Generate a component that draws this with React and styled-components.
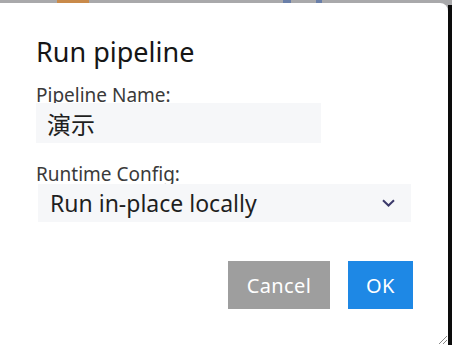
import React from 'react';
import styled, { createGlobalStyle } from 'styled-components';

const GlobalStyle = createGlobalStyle`
  html, body {
    margin: 0;
    padding: 0;
    background: #a9a9ab;
    overflow: hidden;
  }
`;

const Screen = styled.div`
  position: relative;
  width: 452px;
  height: 345px;
  display: flex;
  flex-flow: row;
  padding-top: 3px;
  box-sizing: border-box;
  font-family: 'Noto Sans', 'Noto Sans CJK SC', sans-serif;
`;

const Backdrop = styled.div`
  position: absolute;
  top: 0;
  left: 0;
  width: 452px;
  height: 3px;
  display: flex;
  flex-flow: row;
`;

const Peek = styled.div`
  margin-left: ${(p) => p.left}px;
  width: ${(p) => p.width}px;
  height: 3px;
  background: ${(p) => p.color};
`;

const Dialog = styled.div`
  width: 448px;
  height: 342px;
  background: #ffffff;
  border-radius: 0 8px 0 0;
  box-sizing: border-box;
  padding: 33px 36px 0 36px;
  display: flex;
  flex-flow: column;
  position: relative;
`;

const Edge = styled.div`
  width: 4px;
  height: 340px;
  margin-top: 2px;
  background: #0c0c0c;
`;

const Title = styled.h2`
  margin: 0;
  font-size: 27px;
  font-weight: 400;
  line-height: 32px;
  color: #161616;
`;

const Label = styled.label`
  display: block;
  font-size: 19px;
  line-height: 18px;
  color: #3a3a3a;
  margin-top: ${(p) => p.top}px;
`;

const NameBox = styled.div`
  width: 285px;
  height: 40px;
  margin-top: -1px;
  background: #f6f7f9;
  display: flex;
  align-items: center;
  padding-left: 11px;
  box-sizing: border-box;
  font-size: 24px;
  color: #1f1f1f;
  font-family: 'Noto Sans CJK SC', sans-serif;
`;

const SelectBox = styled.div`
  width: 373px;
  height: 38px;
  margin: 1px 0 0 2px;
  background: #f6f7f9;
  display: flex;
  align-items: center;
  justify-content: space-between;
  padding: 0 16px 0 12px;
  box-sizing: border-box;
  font-size: 23px;
  color: #1f1f1f;
`;

const Actions = styled.div`
  display: flex;
  flex-flow: row;
  justify-content: flex-end;
  gap: 18px;
  margin-top: 39px;
  width: 377px;
`;

const Button = styled.button`
  height: 48px;
  width: ${(p) => p.width}px;
  border: none;
  border-radius: 0;
  background: ${(p) => (p.primary ? '#1e88e5' : '#9e9e9e')};
  color: #ffffff;
  font-family: 'Noto Sans', sans-serif;
  font-size: 20px;
  letter-spacing: 0.4px;
  padding: 0;
`;

const Grip = styled.svg`
  position: absolute;
  right: 1px;
  bottom: 1px;
`;

export default function App() {
  return (
    <>
      <GlobalStyle />
      <Screen>
        <Backdrop>
          <Peek left={57} width={32} color="#c98a4a" />
          <Peek left={194} width={8} color="#6a7fa8" />
          <Peek left={25} width={6} color="#6a7fa8" />
        </Backdrop>
        <Dialog>
          <Title>Run pipeline</Title>
          <Label top={18}>Pipeline Name:</Label>
          <NameBox>演示</NameBox>
          <Label top={22}>Runtime Config:</Label>
          <SelectBox>
            <span>Run in-place locally</span>
            <svg width="13" height="8" viewBox="0 0 13 8">
              <path d="M1 1.2 L6.5 6.5 L12 1.2" fill="none" stroke="#3c3a6b" strokeWidth="2" />
            </svg>
          </SelectBox>
          <Actions>
            <Button width={102}>Cancel</Button>
            <Button primary width={65}>OK</Button>
          </Actions>
          <Grip width="10" height="10" viewBox="0 0 10 10">
            <path d="M2 10 L10 2 M6 10 L10 6" stroke="#888" strokeWidth="1" />
          </Grip>
        </Dialog>
        <Edge />
      </Screen>
    </>
  );
}
